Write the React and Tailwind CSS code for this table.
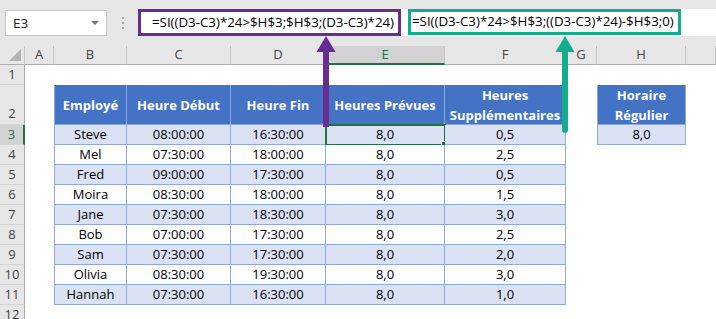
import React from "react";

const W = ["w-[29px]", "w-[73px]", "w-[104px]", "w-[95px]", "w-[119px]", "w-[121px]", "w-[31px]", "w-[89px]", "w-[30px]"];
// last column runs past the window edge, so its letter is not shown
const LETTERS = ["A", "B", "C", "D", "E", "F", "G", "H", ""];

const rows = [
  ["Steve", "08:00:00", "16:30:00", "8,0", "0,5"],
  ["Mel", "07:30:00", "18:00:00", "8,0", "2,5"],
  ["Fred", "09:00:00", "17:30:00", "8,0", "0,5"],
  ["Moira", "08:30:00", "18:00:00", "8,0", "1,5"],
  ["Jane", "07:30:00", "18:30:00", "8,0", "3,0"],
  ["Bob", "07:00:00", "17:30:00", "8,0", "2,5"],
  ["Sam", "07:30:00", "17:30:00", "8,0", "2,0"],
  ["Olivia", "08:30:00", "19:30:00", "8,0", "3,0"],
  ["Hannah", "07:30:00", "16:30:00", "8,0", "1,0"],
];

const RowHead = ({ n, tall, active }) => (
  <div
    className={`w-[25px] shrink-0 flex justify-center border-b border-b-[#d4d4d4] ${
      tall ? "items-end pb-[1px]" : "items-center"
    } ${
      active
        ? "bg-[#d2d2d2] text-[#217346] border-r-2 border-r-[#217346]"
        : "bg-[#e6e6e6] text-[#444] border-r border-r-[#ababab]"
    }`}
  >
    {n}
  </div>
);

const Blank = ({ i }) => <div className={`${W[i]} shrink-0`} />;

const Head = ({ i, first, children }) => (
  <div
    className={`${W[i]} shrink-0 bg-[#4472c4] text-white font-bold leading-[20px] flex items-center justify-center text-center border-r border-b border-[#8ea9db] ${
      first ? "border-l" : ""
    }`}
  >
    {children}
  </div>
);

const Cell = ({ i, band, first, children }) => (
  <div
    className={`${W[i]} shrink-0 relative flex items-center justify-center border-r border-b border-[#8ea9db] ${
      band ? "bg-[#d9e1f2]" : "bg-white"
    } ${first ? "border-l" : ""}`}
  >
    {children}
  </div>
);

export default function App() {
  return (
    <div className="w-[716px] h-[319px] overflow-hidden relative bg-white text-[13px] text-black font-['Open_Sans',sans-serif]">
      {/* formula bar */}
      <div className="h-[46px] bg-[#e6e6e6] flex items-start pt-[9px]">
        <div className="ml-[5px] mt-[1px] w-[102px] h-[26px] bg-white border border-[#c6c6c6] flex items-center pl-[7px] text-[13.5px] text-[#222] relative">
          E3
          <div className="absolute right-[7px] top-[10px] w-0 h-0 border-l-[4px] border-r-[4px] border-t-[4px] border-l-transparent border-r-transparent border-t-[#777]" />
        </div>
        <div className="w-[31px] h-[27px] flex flex-col items-center justify-center gap-[3px]">
          <div className="w-[2px] h-[2px] bg-[#a6a6a6]" />
          <div className="w-[2px] h-[2px] bg-[#a6a6a6]" />
          <div className="w-[2px] h-[2px] bg-[#a6a6a6]" />
        </div>
        <div className="flex-1 h-[27px] bg-white flex items-start text-[13.3px]">
          <div className="w-[263px] h-[27px] border-[3px] border-[#6b2c91] flex items-center pl-[11px] whitespace-nowrap">
            =SI((D3-C3)*24&gt;$H$3;$H$3;(D3-C3)*24)
          </div>
          <div className="ml-[7px] w-[273px] h-[26px] border-[3px] border-[#11ae8d] flex items-center pl-[1px] whitespace-nowrap">
            =SI((D3-C3)*24&gt;$H$3;((D3-C3)*24)-$H$3;0)
          </div>
        </div>
      </div>

      {/* column headers */}
      <div className="h-[19px] flex bg-[#e6e6e6] text-[#444]">
        <div className="w-[25px] shrink-0 border-r border-b border-r-[#c6c6c6] border-b-[#ababab] relative">
          <svg className="absolute right-[3px] bottom-[3px]" width="12" height="12" viewBox="0 0 12 12">
            <polygon points="12,0 12,12 0,12" fill="#b4b4b4" />
          </svg>
        </div>
        {LETTERS.map((l, i) => (
          <div
            key={i}
            className={`${W[i]} shrink-0 flex items-center justify-center border-r border-r-[#c6c6c6] ${
              l === "E"
                ? "bg-[#d2d2d2] text-[#217346] border-b-2 border-b-[#217346]"
                : "border-b border-b-[#ababab]"
            }`}
          >
            {l}
          </div>
        ))}
      </div>

      {/* row 1 */}
      <div className="flex h-[20px]">
        <RowHead n={1} />
      </div>

      {/* row 2: table headers */}
      <div className="flex h-[40px]">
        <RowHead n={2} tall />
        <Blank i={0} />
        <Head i={1} first>Employé</Head>
        <Head i={2}>Heure Début</Head>
        <Head i={3}>Heure Fin</Head>
        <Head i={4}>Heures Prévues</Head>
        <Head i={5}>
          Heures
          <br />
          Supplémentaires
        </Head>
        <Blank i={6} />
        <Head i={7} first>
          Horaire
          <br />
          Régulier
        </Head>
      </div>

      {rows.map((r, idx) => {
        const band = idx % 2 === 0;
        const active = idx === 0;
        return (
          <div key={r[0]} className="flex h-[20px]">
            <RowHead n={idx + 3} active={active} />
            <Blank i={0} />
            <Cell i={1} band={band} first>{r[0]}</Cell>
            <Cell i={2} band={band}>{r[1]}</Cell>
            <Cell i={3} band={band}>{r[2]}</Cell>
            <Cell i={4} band={band}>
              {r[3]}
              {active && (
                <div className="absolute -left-[1px] -top-[1px] w-[121px] h-[22px] border-2 border-[#217346]">
                  <div className="absolute -right-[4px] -bottom-[4px] w-[7px] h-[7px] bg-[#217346] border border-white" />
                </div>
              )}
            </Cell>
            <Cell i={5} band={band}>{r[4]}</Cell>
            {active && (
              <>
                <Blank i={6} />
                <Cell i={7} band first>8,0</Cell>
              </>
            )}
          </div>
        );
      })}

      <div className="flex h-[20px]">
        <RowHead n={12} />
      </div>

      {/* pointer arrows */}
      <svg className="absolute left-0 top-0 pointer-events-none" width="716" height="319">
        <line x1="326" y1="50" x2="326" y2="127" stroke="#6b2c91" strokeWidth="6" />
        <polygon points="326,36 316.5,52 335.5,52" fill="#6b2c91" />
        <line x1="565" y1="50" x2="565" y2="130" stroke="#11ae8d" strokeWidth="6" strokeLinecap="round" />
        <polygon points="565,36 555.5,52 574.5,52" fill="#11ae8d" />
      </svg>
    </div>
  );
}
